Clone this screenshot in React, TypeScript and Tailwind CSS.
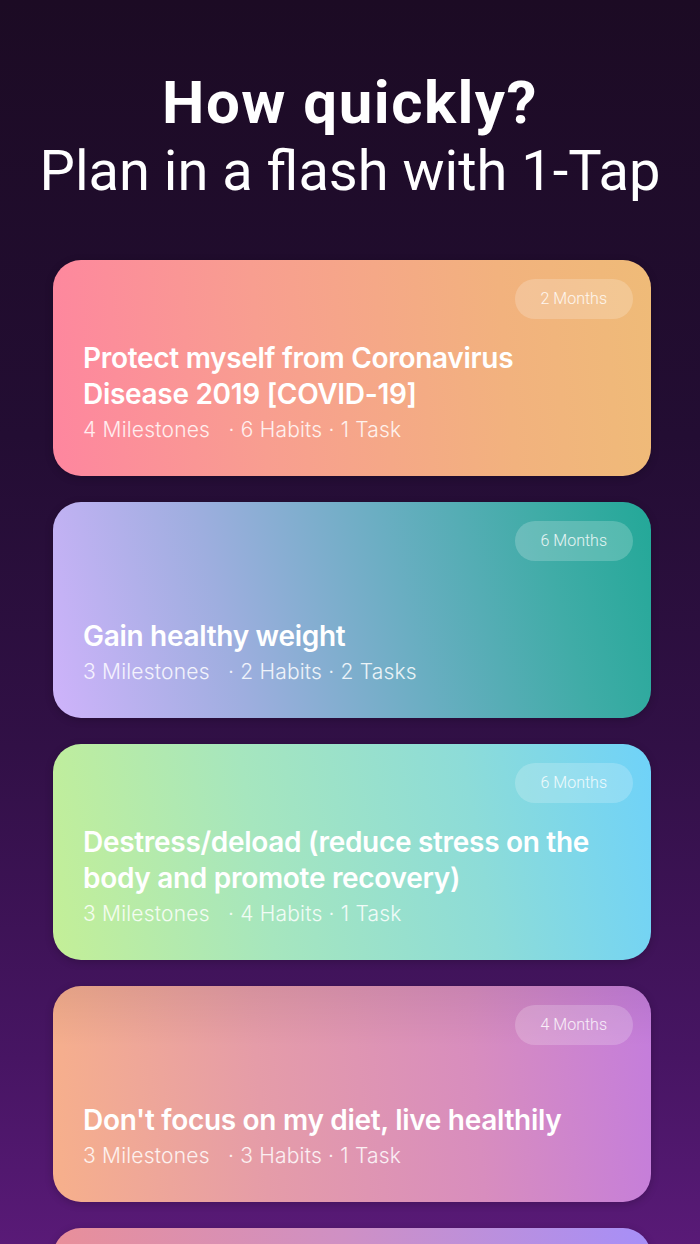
import React from "react";

type Plan = {
  duration: string;
  title: string[];
  milestones: number;
  habits: number;
  tasks: number;
  gradient: string;
  shade?: boolean;
};

const plans: Plan[] = [
  {
    duration: "2 Months",
    title: ["Protect myself from Coronavirus", "Disease 2019 [COVID-19]"],
    milestones: 4,
    habits: 6,
    tasks: 1,
    gradient: "bg-[linear-gradient(85deg,#fe869f_0%,#f89e90_35%,#f2b27e_75%,#efbb78_100%)]",
  },
  {
    duration: "6 Months",
    title: ["Gain healthy weight"],
    milestones: 3,
    habits: 2,
    tasks: 2,
    gradient: "bg-[linear-gradient(75deg,#cfb3fb_0%,#9eaedf_30%,#6aaec2_58%,#40aca7_82%,#23a898_100%)]",
  },
  {
    duration: "6 Months",
    title: ["Destress/deload (reduce stress on the", "body and promote recovery)"],
    milestones: 3,
    habits: 4,
    tasks: 1,
    gradient: "bg-[linear-gradient(80deg,#c4ef97_0%,#a6e6be_35%,#8ddcd8_70%,#6fd2f9_100%)]",
  },
  {
    duration: "4 Months",
    title: ["Don't focus on my diet, live healthily"],
    milestones: 3,
    habits: 3,
    tasks: 1,
    gradient: "bg-[linear-gradient(85deg,#f7b08b_0%,#e59ca8_35%,#d88dbe_70%,#c47ddc_100%)]",
    shade: true,
  },
];

const PlanCard: React.FC<{ plan: Plan }> = ({ plan }) => (
  <div
    className={`relative flex h-[216px] shrink-0 flex-col overflow-hidden rounded-[28px] ${plan.gradient} pt-[19px] pr-[18px] shadow-[0_2px_8px_rgba(0,0,0,0.2)]`}
  >
    {plan.shade && (
      <div className="absolute inset-x-0 top-0 h-[60px] bg-gradient-to-b from-black/[0.07] to-transparent" />
    )}

    {/* Duration pill */}
    <span className="relative self-end rounded-[20px] bg-white/20 px-[26px] py-[9px] text-[16px] leading-[22px] font-light text-white/85">
      {plan.duration}
    </span>

    {/* Title + counts */}
    <div className="relative mt-auto pl-[30px] pb-[32px] text-white" style={{ fontFamily: "Inter, Roboto, sans-serif" }}>
      <h3 className="text-[28px] leading-[36px] font-semibold tracking-[-0.3px]">
        {plan.title.map((line) => (
          <span key={line} className="block">
            {line}
          </span>
        ))}
      </h3>
      <p className="mt-[4px] text-[21px] leading-[28px] font-light tracking-[0.2px] text-white/85">
        {plan.milestones} Milestones<span className="whitespace-pre">{"   "}</span>· {plan.habits} Habits ·{" "}
        {plan.tasks} {plan.tasks === 1 ? "Task" : "Tasks"}
      </p>
    </div>
  </div>
);

export default function App() {
  return (
    <div
      className="flex h-[1244px] w-[700px] flex-col overflow-hidden bg-[linear-gradient(180deg,#1c0b24_0%,#230d33_35%,#311046_60%,#471563_85%,#591a77_100%)] text-white"
      style={{ fontFamily: "Roboto, 'Noto Sans', sans-serif" }}
    >
      {/* Header */}
      <header className="pt-[69px] text-center">
        <h1 className="text-[60px] leading-[68px] font-bold tracking-[1.5px]">How quickly?</h1>
        <h2 className="text-[56px] leading-[68px] font-normal">Plan in a flash with 1-Tap</h2>
      </header>

      {/* Plans */}
      <div className="mt-[55px] flex flex-col gap-[26px] pr-[49px] pl-[53px]">
        {plans.map((plan, i) => (
          <PlanCard key={i} plan={plan} />
        ))}
        {/* next plan peeking in at the bottom */}
        <div className="h-[216px] shrink-0 rounded-[28px] bg-[linear-gradient(85deg,#ea8f97_0%,#cf90c4_50%,#a68ff8_100%)] shadow-[0_2px_8px_rgba(0,0,0,0.2)]" />
      </div>
    </div>
  );
}
